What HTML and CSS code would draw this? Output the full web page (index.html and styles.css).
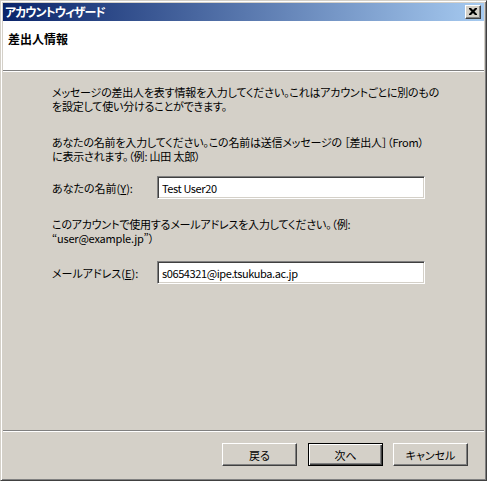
FILE: index.html
```html
<!DOCTYPE html>
<html lang="ja">
<head>
  <meta charset="UTF-8">
  <title>アカウントウィザード</title>
  <link rel="stylesheet" href="styles.css">
</head>
<body>
  <div class="window">
    <div class="titlebar">
      <span class="title">アカウントウィザード</span>
      <span class="close-btn">
        <svg width="8" height="7" viewBox="0 0 8 7">
          <path d="M0 0h2l2 2 2-2h2v1l-2.5 2.5 2.5 2.5v1h-2l-2-2-2 2h-2v-1l2.5-2.5-2.5-2.5z" fill="#000"/>
        </svg>
      </span>
    </div>

    <div class="header">
      <h1>差出人情報</h1>
    </div>

    <div class="content">
      <p class="text">メッセージの差出人を表す情報を入力してください。これはアカウントごとに別のもの<br>を設定して使い分けることができます。</p>

      <p class="text gap">あなたの名前を入力してください。この名前は送信メッセージの ［差出人］（From）<br>に表示されます。（例: 山田 太郎）</p>

      <div class="field">
        <label for="name">あなたの名前(<u>Y</u>):</label>
        <input type="text" id="name" value="Test User20">
      </div>

      <p class="text gap2">このアカウントで使用するメールアドレスを入力してください。（例:<br>“user@example.jp”）</p>

      <div class="field field2">
        <label for="mail">メールアドレス(<u>E</u>):</label>
        <input type="text" id="mail" value="s0654321@ipe.tsukuba.ac.jp">
      </div>
    </div>

    <div class="footer">
      <button type="button">戻る</button>
      <button type="button" class="default">次へ</button>
      <button type="button" class="cancel">キャンセル</button>
    </div>
  </div>
</body>
</html>
```

FILE: styles.css
```css
html, body {
  margin: 0;
  padding: 0;
}

body {
  font-family: "Noto Sans CJK JP", "Liberation Sans", sans-serif;
  font-size: 11px;
  font-feature-settings: "palt";
  color: #000;
  background: #d4d0c8;
}

/* window frame */
.window {
  width: 487px;
  height: 481px;
  box-sizing: border-box;
  border: 1px solid;
  border-color: #d4d0c8 #404040 #404040 #d4d0c8;
  box-shadow: inset 1px 1px #fff, inset -1px -1px #808080;
  padding: 2px;
  background: #d4d0c8;
  display: flex;
  flex-direction: column;
}

.titlebar {
  height: 18px;
  background: linear-gradient(to right, #0a246a, #a6caf0);
  display: flex;
  align-items: center;
  justify-content: space-between;
  padding: 0 3px 0 2px;
}

.title {
  color: #fff;
  font-size: 12px;
  font-weight: bold;
  letter-spacing: -1px;
  line-height: 18px;
}

.close-btn {
  width: 16px;
  height: 14px;
  box-sizing: border-box;
  background: #d4d0c8;
  border: 1px solid;
  border-color: #fff #404040 #404040 #fff;
  box-shadow: inset -1px -1px #808080;
  display: flex;
  align-items: center;
  justify-content: center;
  padding: 0 1px 1px 0;
}

.header {
  height: 50px;
  background: #fff;
  border-bottom: 1px solid #808080;
  box-shadow: 0 1px #fff;
  padding: 9px 0 0 5px;
  box-sizing: border-box;
}

.header h1 {
  margin: 0;
  font-size: 12px;
  font-weight: bold;
  line-height: 18px;
}

.content {
  flex: 1;
  padding: 14px 0 0 49px;
}

.text {
  margin: 0;
  line-height: 14px;
  white-space: nowrap;
  letter-spacing: -0.2px;
}

.gap {
  margin-top: 22px;
}

.gap2 {
  margin-top: 18px;
}

.field {
  display: flex;
  align-items: center;
  margin-top: 13px;
}

.field2 {
  margin-top: 16px;
}

.field label {
  width: 105px;
}

.field input {
  width: 268px;
  height: 23px;
  box-sizing: border-box;
  border: 1px solid;
  border-color: #808080 #fff #fff #808080;
  box-shadow: inset 1px 1px #404040, inset -1px -1px #d4d0c8;
  padding: 0 0 0 4px;
  font-family: "Noto Sans CJK JP", "Liberation Sans", sans-serif;
  font-size: 11px;
  letter-spacing: -0.4px;
  background: #fff;
  outline: none;
}

.footer {
  border-top: 1px solid #808080;
  box-shadow: inset 0 1px #fff;
  padding: 12px 16px 12px 0;
  display: flex;
  justify-content: flex-end;
}

.footer button {
  width: 75px;
  height: 23px;
  box-sizing: border-box;
  background: #d4d0c8;
  border: 1px solid;
  border-color: #fff #404040 #404040 #fff;
  box-shadow: inset -1px -1px #808080;
  font-family: "Noto Sans CJK JP", "Liberation Sans", sans-serif;
  font-size: 11px;
  font-feature-settings: "palt";
  color: #000;
  padding: 0;
}

.footer button.default {
  margin-left: 11px;
  border-color: #000;
  box-shadow: inset 1px 1px #fff, inset -1px -1px #404040, inset -2px -2px #808080;
}

.footer button.cancel {
  margin-left: 10px;
}
```
